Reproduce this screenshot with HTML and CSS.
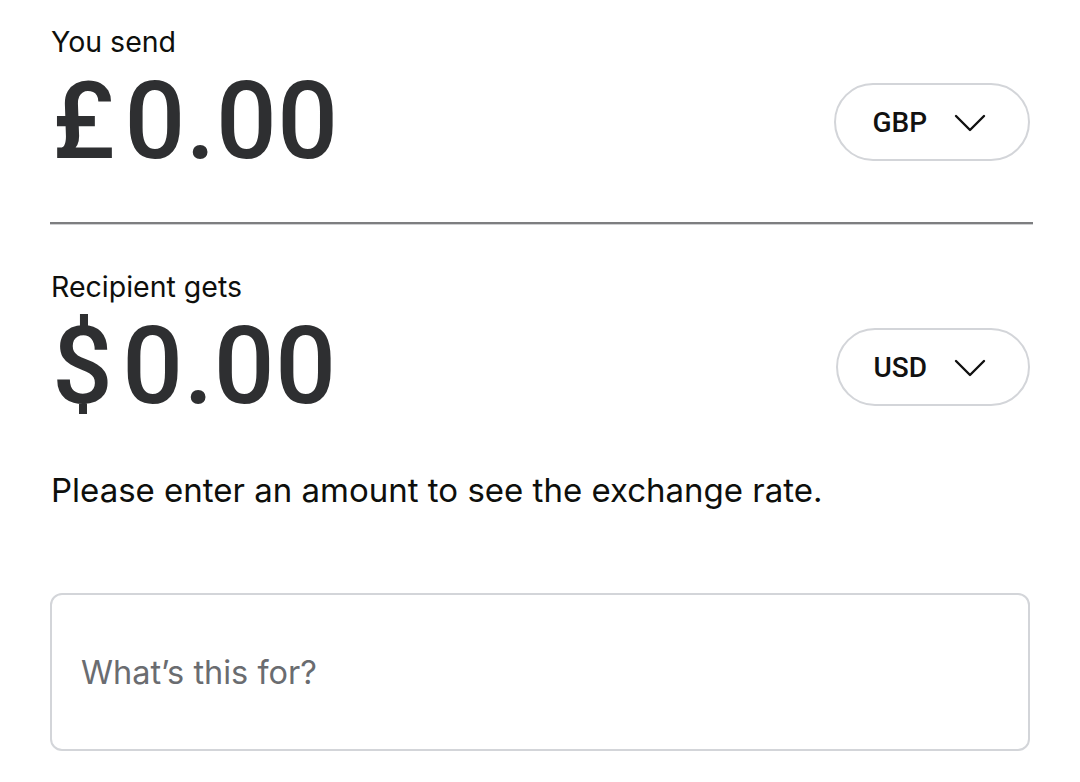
FILE: index.html
```html
<!DOCTYPE html>
<html>
<head>
<meta charset="utf-8">
<link rel="stylesheet" href="styles.css">
</head>
<body>
<main class="form">
  <section class="field">
    <div class="label">You send</div>
    <div class="row">
      <div class="amount"><span class="sym">£</span>0.00</div>
      <button class="pill pill-gbp">
        <span class="code">GBP</span>
        <svg class="chev" viewBox="0 0 32 18" width="32" height="18"><path d="M2 2 L16 16 L30 2" fill="none" stroke="#111" stroke-width="2.4" stroke-linecap="round" stroke-linejoin="round"/></svg>
      </button>
    </div>
  </section>
  <div class="divider"></div>
  <section class="field field-second">
    <div class="label">Recipient gets</div>
    <div class="row">
      <div class="amount"><span class="sym">$</span>0.00</div>
      <button class="pill pill-usd">
        <span class="code">USD</span>
        <svg class="chev" viewBox="0 0 32 18" width="32" height="18"><path d="M2 2 L16 16 L30 2" fill="none" stroke="#111" stroke-width="2.4" stroke-linecap="round" stroke-linejoin="round"/></svg>
      </button>
    </div>
  </section>
  <p class="message">Please enter an amount to see the exchange rate.</p>
  <div class="input">What’s this for?</div>
</main>
</body>
</html>
```
FILE: styles.css
```css
html, body {
  margin: 0;
  padding: 0;
  background: #ffffff;
}
body {
  font-family: Inter, Roboto, sans-serif;
  color: #0e0f0c;
}
.form {
  padding: 24px 50px 0 50px;
  width: 980px;
}
.label {
  font-size: 28.5px;
  line-height: 36px;
  padding-left: 1px;
}
.row {
  display: flex;
  align-items: center;
  justify-content: space-between;
  height: 124px;
}
.amount {
  font-family: Roboto, Inter, sans-serif;
  font-size: 107px;
  font-weight: 500;
  color: #2e2f31;
  letter-spacing: 0.5px;
  line-height: 100px;
  padding-left: 2px;
}
.sym {
  margin-right: 9px;
}
.pill {
  height: 78px;
  border: 2px solid #d3d5d9;
  border-radius: 40px;
  background: #fff;
  display: flex;
  align-items: center;
  box-sizing: border-box;
  padding: 0 42px 0 36px;
  gap: 27px;
  font-family: Roboto, Inter, sans-serif;
  font-size: 28px;
  font-weight: 500;
  color: #111;
}
.pill-usd {
  padding-left: 35px;
}
.chev {
  display: block;
  margin-top: 2px;
}
.divider {
  margin-top: 38px;
  width: 983px;
  height: 2px;
  background: #7d7e80;
  border-bottom: 1px solid #cfd0d2;
}
.field-second {
  margin-top: 44px;
}
.message {
  margin: 41px 0 0 1px;
  font-size: 33px;
  line-height: 40px;
  color: #0e0f0c;
}
.input {
  margin-top: 83px;
  height: 158px;
  box-sizing: border-box;
  border: 2px solid #d3d5d9;
  border-radius: 12px;
  display: flex;
  align-items: center;
  padding-left: 29px;
  font-size: 32.5px;
  color: #6a6c70;
}
```
